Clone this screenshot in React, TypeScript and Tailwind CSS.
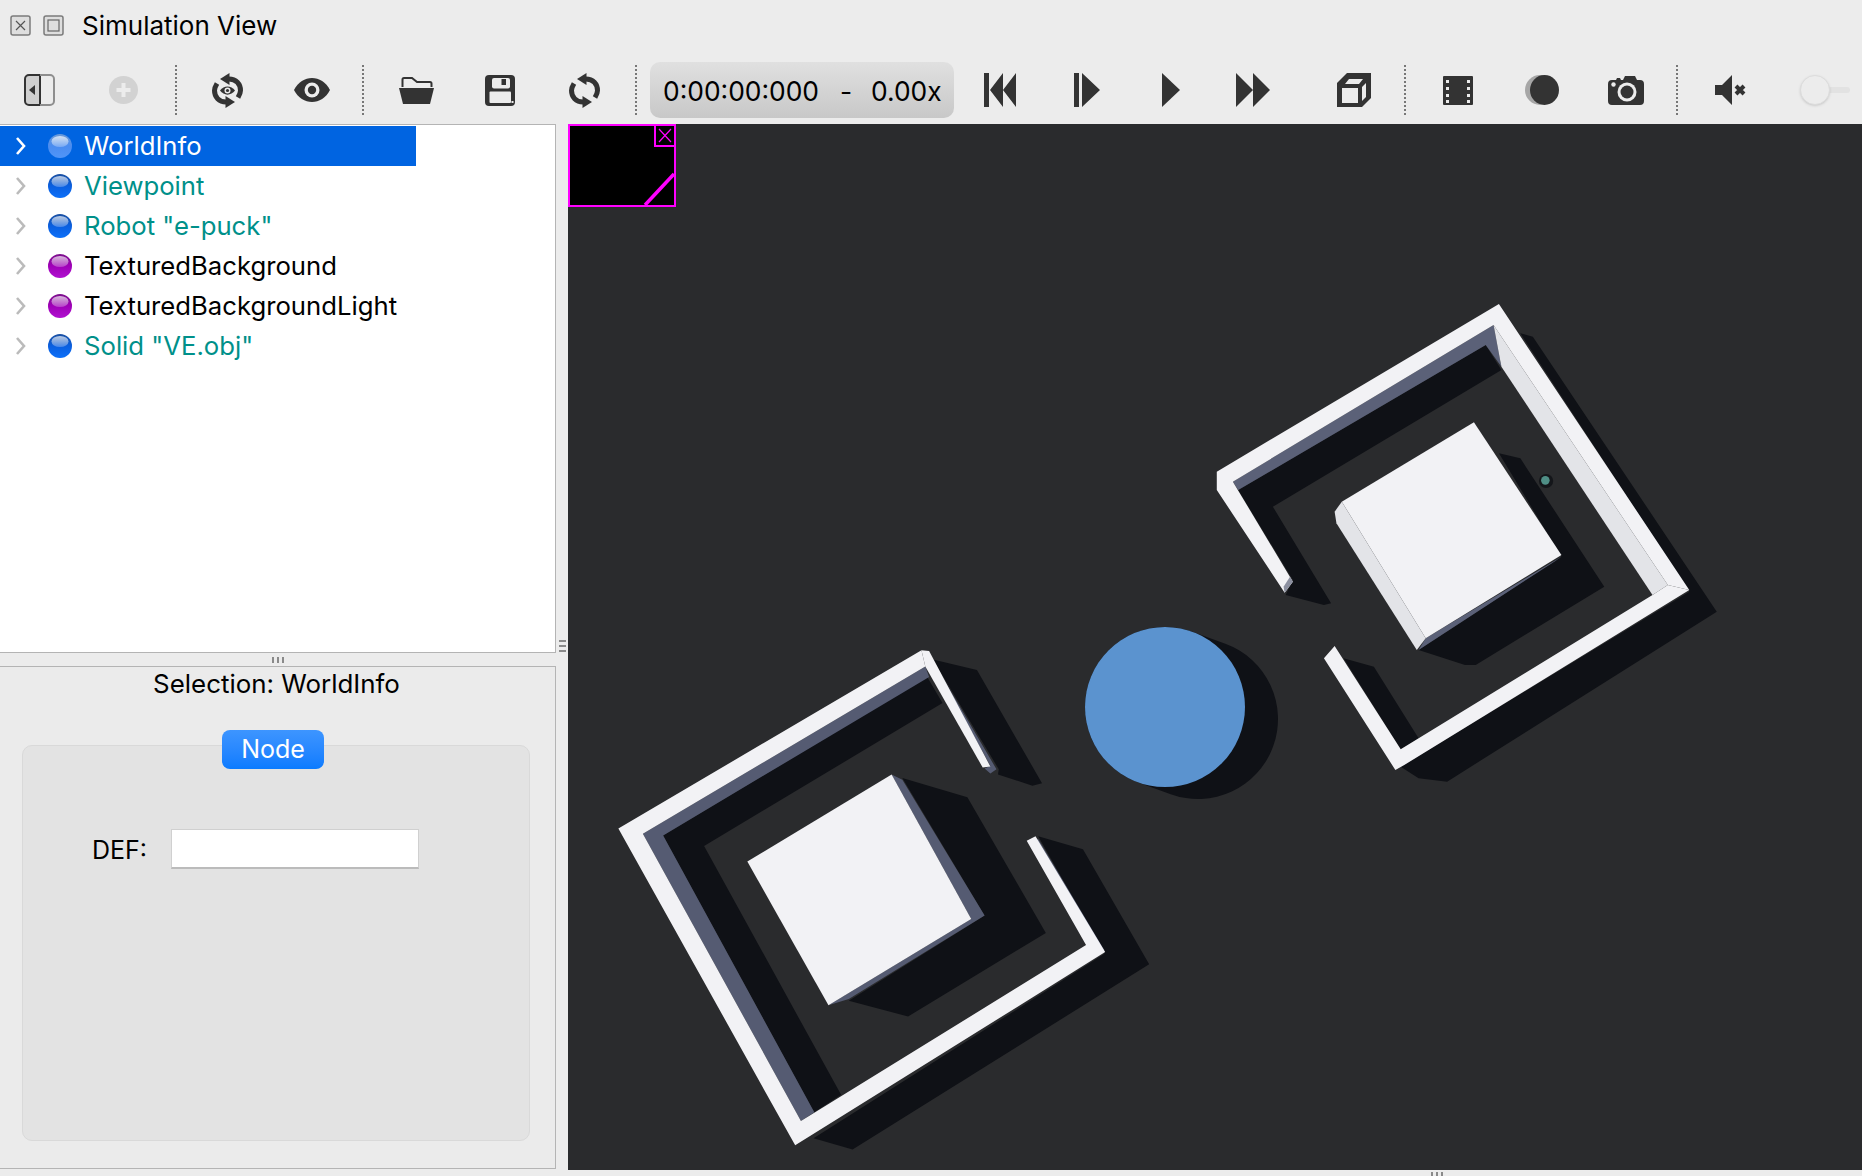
import React from "react";

// toolbar icons, all drawn at their pixel size
const DARK = "#333333";

function PanelIcon() {
  return (
    <svg width="31" height="32" viewBox="0 0 31 32" className="ml-[24px] shrink-0">
      <path d="M16 1H5a4 4 0 0 0-4 4v22a4 4 0 0 0 4 4h11z" fill="#cfcfcf" stroke={DARK} strokeWidth="2" />
      <path d="M16 1h10a4 4 0 0 1 4 4v22a4 4 0 0 1-4 4H16" fill="none" stroke="#8e8e8e" strokeWidth="2" />
      <path d="M11 11v10l-6-5z" fill={DARK} />
    </svg>
  );
}

function PlusIcon() {
  return (
    <svg width="29" height="28" viewBox="0 0 29 28" className="ml-[54px] shrink-0">
      <ellipse cx="14.5" cy="14" rx="14.5" ry="14" fill="#d2d2d2" />
      <path d="M12.5 7h4v5h5v4h-5v5h-4v-5h-5v-4h5z" fill="#ececec" />
    </svg>
  );
}

function Arcs() {
  return (
    <>
      <path d="M17 6C24 6 28.5 11 28.5 17.5c0 2.5-1 4.500-2.500 7" fill="none" stroke={DARK} strokeWidth="5" />
      <path d="M17.500 0v12L8 6z" fill={DARK} />
      <path d="M14 29C7 29 2.500 24 2.500 17.500c0-2.500 1-4.500 2.500-7" fill="none" stroke={DARK} strokeWidth="5" />
      <path d="M13.500 23v12l9.500-6z" fill={DARK} />
    </>
  );
}

function SyncEyeIcon() {
  return (
    <svg width="31" height="35" viewBox="0 0 31 35" className="ml-[35px] shrink-0">
      <Arcs />
      <path d="M8 17.500c4-5.500 11-5.500 15 0-4 5.500-11 5.500-15 0z" fill={DARK} />
      <circle cx="15.500" cy="17.500" r="3" fill="#ececec" />
      <circle cx="15.500" cy="17.500" r="1.600" fill={DARK} />
    </svg>
  );
}

function EyeIcon() {
  return (
    <svg width="36" height="24" viewBox="0 0 36 24" className="ml-[51px] shrink-0">
      <path d="M0 12C8-4 28-4 36 12 28 28 8 28 0 12z" fill={DARK} />
      <circle cx="18" cy="12" r="7.500" fill="#ececec" />
      <circle cx="18" cy="12" r="4.200" fill={DARK} />
    </svg>
  );
}

function FolderIcon() {
  return (
    <svg width="35" height="28" viewBox="0 0 35 28" className="ml-[35px] shrink-0">
      <path d="M3.500 11V3.500a1.500 1.500 0 0 1 1.500-1.500h8l5 4h13a1.500 1.500 0 0 1 1.500 1.500V11" fill="none" stroke={DARK} strokeWidth="2" />
      <path d="M0 12h35l-4 16H4z" fill={DARK} />
    </svg>
  );
}

function SaveIcon() {
  return (
    <svg width="30" height="31" viewBox="0 0 30 31" className="ml-[51px] shrink-0">
      <rect width="30" height="31" rx="4" fill={DARK} />
      <rect x="7" y="3" width="18" height="10.500" rx="2" fill="#ececec" />
      <rect x="16.500" y="4" width="4.500" height="6" fill={DARK} />
      <rect x="4.500" y="16.500" width="21.500" height="11.500" rx="1" fill="#ececec" />
      <rect x="26.500" y="26" width="2" height="2" fill="#ececec" />
    </svg>
  );
}

function ReloadIcon() {
  return (
    <svg width="31" height="35" viewBox="0 0 31 35" className="ml-[54px] shrink-0">
      <Arcs />
    </svg>
  );
}

function SkipBackIcon() {
  return (
    <svg width="32" height="34" viewBox="0 0 32 34" className="ml-[30px] shrink-0">
      <path d="M0 0h5v34H0zM6 17 19 0v34zM19 17 32 0v34z" fill={DARK} />
    </svg>
  );
}

function StepIcon() {
  return (
    <svg width="26" height="34" viewBox="0 0 26 34" className="ml-[58px] shrink-0">
      <path d="M0 0h5v34H0zM8 0l18 17L8 34z" fill={DARK} />
    </svg>
  );
}

function PlayIcon() {
  return (
    <svg width="18" height="34" viewBox="0 0 18 34" className="ml-[62px] shrink-0">
      <path d="M0 0l18 17L0 34z" fill={DARK} />
    </svg>
  );
}

function FastForwardIcon() {
  return (
    <svg width="34" height="34" viewBox="0 0 34 34" className="ml-[56px] shrink-0">
      <path d="M0 0l17 17L0 34zM17 0l17 17-17 17z" fill={DARK} />
    </svg>
  );
}

function CubeIcon() {
  return (
    <svg width="34" height="34" viewBox="0 0 34 34" className="ml-[67px] shrink-0">
      <path d="M10 0h24v25l-9 9H0V10z" fill={DARK} />
      <path d="M5 15h16v15H5z" fill="#ececec" />
      <path d="M8 11l4-5h14l-4 5zM25 14l4-4v14l-4 4z" fill="#ececec" />
    </svg>
  );
}

function FilmIcon() {
  return (
    <svg width="30" height="29" viewBox="0 0 30 29" className="ml-[37px] shrink-0">
      <rect width="30" height="29" rx="1" fill={DARK} />
      <path d="M3 4h3v3H3zM3 11h3v3H3zM3 18h3v3H3zM3 24h3v3H3zM24 4h3v3h-3zM24 11h3v3h-3zM24 18h3v3h-3zM24 24h3v3h-3z" fill="#ececec" />
    </svg>
  );
}

function MoonIcon() {
  return (
    <svg width="34" height="30" viewBox="0 0 34 30" className="ml-[52px] shrink-0">
      <ellipse cx="15" cy="15" rx="15" ry="15" fill="#a6a6a6" />
      <ellipse cx="19.500" cy="15" rx="14.500" ry="15" fill={DARK} />
    </svg>
  );
}

function CameraIcon() {
  return (
    <svg width="36" height="29" viewBox="0 0 36 29" className="ml-[49px] shrink-0">
      <path d="M5 4h3l1-2h3l1 2h2l2-4h10l2 4h3a4 4 0 0 1 4 4v17a4 4 0 0 1-4 4H4a4 4 0 0 1-4-4V8a4 4 0 0 1 4-4z" fill={DARK} />
      <circle cx="19" cy="16" r="9.500" fill="#ececec" />
      <circle cx="19" cy="16" r="6.500" fill={DARK} />
      <circle cx="5.500" cy="8.500" r="2.200" fill="#ececec" />
    </svg>
  );
}

function MuteIcon() {
  return (
    <svg width="31" height="30" viewBox="0 0 31 30" className="ml-[37px] shrink-0">
      <path d="M0 10h7L17 0v30L7 20H0z" fill={DARK} />
      <path d="M21 11l8 8M29 11l-8 8" stroke={DARK} strokeWidth="4" fill="none" />
    </svg>
  );
}

function Separator({ className }: { className: string }) {
  return <div className={`h-[50px] w-[2px] shrink-0 border-l-2 border-dotted border-[#777777] ${className}`} />;
}

function WindowButtons() {
  return (
    <>
      <svg width="21" height="21" viewBox="0 0 21 21" className="ml-[10px] shrink-0">
        <rect x="1" y="1" width="19" height="19" rx="2" fill="#dedede" stroke="#7b7b7b" strokeWidth="1.500" />
        <path d="M6 6l9 9M15 6l-9 9" stroke="#555555" strokeWidth="1.200" />
      </svg>
      <svg width="21" height="21" viewBox="0 0 21 21" className="ml-[12px] shrink-0">
        <rect x="1" y="1" width="19" height="19" rx="2" fill="#dedede" stroke="#7b7b7b" strokeWidth="1.500" />
        <rect x="5" y="5" width="11" height="11" fill="none" stroke="#666666" strokeWidth="1.200" />
      </svg>
    </>
  );
}

function Sphere({ color }: { color: "blue" | "purple" | "faded" }) {
  const stops = {
    blue: ["#1a4fa0", "#0a5fe0", "#0d6ff8"],
    purple: ["#7a0f8a", "#a000b8", "#b010d0"],
    faded: ["#6a9ad8", "#4a8cf0", "#5095f8"],
  }[color];
  return (
    <svg width="24" height="24" viewBox="0 0 24 24" className="shrink-0">
      <defs>
        <linearGradient id={`sphere-${color}`} x1="0" y1="0" x2="0" y2="1">
          <stop offset="0" stopColor={stops[0]} />
          <stop offset="0.5" stopColor={stops[1]} />
          <stop offset="1" stopColor={stops[2]} />
        </linearGradient>
        <linearGradient id={`shine-${color}`} x1="0" y1="0" x2="0" y2="1">
          <stop offset="0" stopColor="#ffffff" stopOpacity="0.7" />
          <stop offset="1" stopColor="#ffffff" stopOpacity="0.25" />
        </linearGradient>
      </defs>
      <circle cx="12" cy="12" r="12" fill={`url(#sphere-${color})`} />
      <ellipse cx="12" cy="7.500" rx="8.500" ry="5.500" fill={`url(#shine-${color})`} />
    </svg>
  );
}

type TreeRow = { label: string; sphere: "blue" | "purple" | "faded"; text: string };

const rows: TreeRow[] = [
  { label: "WorldInfo", sphere: "faded", text: "text-white" },
  { label: "Viewpoint", sphere: "blue", text: "text-[#00908a]" },
  { label: 'Robot "e-puck"', sphere: "blue", text: "text-[#00908a]" },
  { label: "TexturedBackground", sphere: "purple", text: "text-black" },
  { label: "TexturedBackgroundLight", sphere: "purple", text: "text-black" },
  { label: 'Solid "VE.obj"', sphere: "blue", text: "text-[#00908a]" },
];

function SceneTree() {
  return (
    <div className="h-[529px] border-y border-r border-[#b4b4b4] bg-white pt-[1px]">
      {rows.map((row, i) => (
        <div
          key={row.label}
          className={`flex h-[40px] w-[416px] items-center ${i === 0 ? "bg-[#0064e1]" : ""}`}
        >
          <svg width="12" height="20" viewBox="0 0 12 20" className="ml-[15px] shrink-0">
            <path d="M2 2l7 8-7 8" fill="none" stroke={i === 0 ? "#ffffff" : "#bbbbbb"} strokeWidth="2.600" />
          </svg>
          <div className="ml-[21px]">
            <Sphere color={row.sphere} />
          </div>
          <span className={`ml-[12px] whitespace-nowrap text-[25.7px] ${row.text}`}>{row.label}</span>
        </div>
      ))}
    </div>
  );
}

function Inspector() {
  return (
    <div className="h-[503px] border-y border-r border-[#b4b4b4] bg-[#ebebeb]">
      <div className="flex h-[34px] items-center justify-center pr-[2px] text-[25.9px] text-black">Selection: WorldInfo</div>
      <div className="relative mx-[22px] mt-[44px] h-[396px] w-[508px] rounded-[10px] border border-[#d9d9d9] bg-[#e3e3e3] pl-[69px] pt-[82px]">
        <div className="absolute left-[199px] top-[-16px] flex h-[39px] w-[102px] items-center justify-center rounded-[8px] bg-gradient-to-b from-[#3d95ff] to-[#0a7bff] text-[25px] text-white">
          Node
        </div>
        <div className="flex items-center">
          <span className="w-[79px] pt-[4px] text-[25px] text-black">DEF:</span>
          <div className="h-[40px] w-[248px] border border-b-2 border-[#d0d0d0] border-b-[#bbbbbb] bg-white" />
        </div>
      </div>
    </div>
  );
}

function LeftStructure() {
  return (
    <g transform="translate(600 630) scale(0.3827 0.3482)">
      <polygon points="870,85 985,115 1155,440 1130,447 1040,415 1042,400" fill="#0f1116" />
      <polygon points="1145,592 1262,630 1435,960 660,1492 558,1460 1318,930" fill="#0f1116" />
      <polygon points="165,590 855,135 895,210 272,620 630,1335 560,1385" fill="#0f1116" />
      <polygon points="790,425 960,480 1165,870 805,1110 650,1065 1005,820" fill="#0f1116" />
      <polygon points="112,585 850,105 860,135 165,590 560,1385 525,1410" fill="#555b72" />
      <polygon points="860,70 1036,400 1020,412 1005,398 1020,390" fill="#555b72" />
      <polygon points="1145,600 1318,920 1300,935 1130,610" fill="#555b72" />
      <polygon points="48,570 840,58 850,105 112,585 525,1410 1270,905 1115,605 1138,592 1320,925 510,1480" fill="#f2f2f5" />
      <polygon points="840,58 860,60 1020,392 1000,395 850,105" fill="#f2f2f5" />
      <polygon points="762,415 790,430 1005,820 650,1060 597,1078 970,830" fill="#555b72" />
      <polygon points="762,415 385,665 597,1078 970,830" fill="#f2f2f5" />
    </g>
  );
}

function RightStructure() {
  return (
    <g transform="translate(1190 290) scale(0.35714 0.33333)">
      <polygon points="925,130 960,140 1475,965 720,1475 640,1465 590,1430 1398,905" fill="#0f1116" />
      <polygon points="135,600 828,165 872,240 232,650 395,940 375,945 268,915 288,870" fill="#0f1116" />
      <polygon points="430,1105 515,1130 640,1345 590,1378" fill="#0f1116" />
      <polygon points="865,490 925,505 1160,890 800,1125 770,1125 640,1080 1040,800" fill="#0f1116" />
      <polygon points="120,575 850,105 872,230 828,165 135,600" fill="#5b6178" />
      <polygon points="850,105 1338,885 1295,915 872,230" fill="#e3e4e8" />
      <polygon points="75,545 865,42 1398,900 1338,885 850,105 120,575 288,875 265,908 75,600" fill="#f2f2f5" />
      <polygon points="1398,900 600,1425 575,1440 375,1105 405,1068 590,1378 1295,915 1338,885" fill="#f2f2f5" />
      <polygon points="288,875 265,908 262,890 280,860" fill="#8c90a0" />
      <polygon points="660,1045 1040,800 1020,815 640,1080" fill="#5b6178" />
      <polygon points="795,397 425,635 660,1045 1040,795" fill="#f2f2f5" />
      <polygon points="425,635 405,665 410,700 635,1080 660,1045" fill="#e3e4e8" />
      <ellipse cx="997" cy="573" rx="20" ry="21" fill="#14161a" />
      <ellipse cx="995" cy="571" rx="12" ry="13" fill="#4f8f86" />
    </g>
  );
}

function Scene() {
  return (
    <svg viewBox="568 124 1294 1046" className="absolute inset-0 h-full w-full">
      <LeftStructure />
      <RightStructure />
      <line x1="1165" y1="707" x2="1198" y2="719" stroke="#0f1116" strokeWidth="160" strokeLinecap="round" />
      <circle cx="1165" cy="707" r="80" fill="#5b93cf" />
    </svg>
  );
}

function Minimap() {
  return (
    <svg width="108" height="83" viewBox="0 0 108 83" className="absolute left-0 top-0">
      <rect x="1" y="1" width="106" height="81" fill="#000000" stroke="#ff00ff" strokeWidth="2" />
      <rect x="87" y="1" width="20" height="21" fill="#000000" stroke="#ff00ff" strokeWidth="2" />
      <path d="M91 5l12 13M103 5L91 18" stroke="#ff00ff" strokeWidth="1.200" />
      <path d="M106 50 77 81" stroke="#ff00ff" strokeWidth="3.500" />
    </svg>
  );
}

export default function App() {
  return (
    <div className="flex h-[1176px] w-[1862px] flex-col overflow-hidden bg-[#ececec] font-[Inter,sans-serif] text-black">
      {/* Title bar */}
      <div className="flex h-[50px] items-center">
        <WindowButtons />
        <span className="ml-[18px] text-[26px]">Simulation View</span>
      </div>

      {/* Toolbar */}
      <div className="flex h-[74px] items-center pt-[6px]">
        <PanelIcon />
        <PlusIcon />
        <Separator className="ml-[37px]" />
        <SyncEyeIcon />
        <EyeIcon />
        <Separator className="ml-[32px]" />
        <FolderIcon />
        <SaveIcon />
        <ReloadIcon />
        <Separator className="ml-[35px]" />
        <div className="ml-[13px] flex h-[56px] w-[304px] shrink-0 items-center whitespace-nowrap rounded-[10px] bg-gradient-to-b from-[#e0e0e0] to-[#c8c8c8] pl-[13px] pt-[3px] text-[26.4px]">
          <span className="w-[177px]">0:00:00:000</span>
          <span className="w-[31px]">-</span>
          <span>0.00x</span>
        </div>
        <SkipBackIcon />
        <StepIcon />
        <PlayIcon />
        <FastForwardIcon />
        <CubeIcon />
        <Separator className="ml-[33px]" />
        <FilmIcon />
        <MoonIcon />
        <CameraIcon />
        <Separator className="ml-[32px]" />
        <MuteIcon />
        <div className="relative ml-[54px] h-[30px] w-[50px] shrink-0">
          <div className="absolute left-[25px] top-[12px] h-[6px] w-[25px] rounded-full bg-[#e2e2e2]" />
          <div className="absolute left-0 top-0 h-[30px] w-[30px] rounded-full border border-[#dcdcdc] bg-[#ececec] shadow-sm" />
        </div>
      </div>

      {/* Panes */}
      <div className="flex h-[1046px]">
        <div className="w-[556px] shrink-0">
          <SceneTree />
          <div className="flex h-[13px] items-center justify-center gap-[3px]">
            <div className="h-[6px] w-[2px] bg-[#8a8a8a]" />
            <div className="h-[6px] w-[2px] bg-[#8a8a8a]" />
            <div className="h-[6px] w-[2px] bg-[#8a8a8a]" />
          </div>
          <Inspector />
        </div>
        <div className="flex w-[12px] shrink-0 flex-col gap-[3px] pl-[3px] pt-[516px]">
          <div className="h-[2px] w-[7px] bg-[#8a8a8a]" />
          <div className="h-[2px] w-[7px] bg-[#8a8a8a]" />
          <div className="h-[2px] w-[7px] bg-[#8a8a8a]" />
        </div>
        <div className="relative flex-1 bg-[#2a2b2d]">
          <Scene />
          <Minimap />
        </div>
      </div>

      {/* Bottom splitter */}
      <div className="flex h-[6px] gap-[3px] pl-[1431px] pt-[2px]">
        <div className="h-[4px] w-[2px] bg-[#8a8a8a]" />
        <div className="h-[4px] w-[2px] bg-[#8a8a8a]" />
        <div className="h-[4px] w-[2px] bg-[#8a8a8a]" />
      </div>
    </div>
  );
}
